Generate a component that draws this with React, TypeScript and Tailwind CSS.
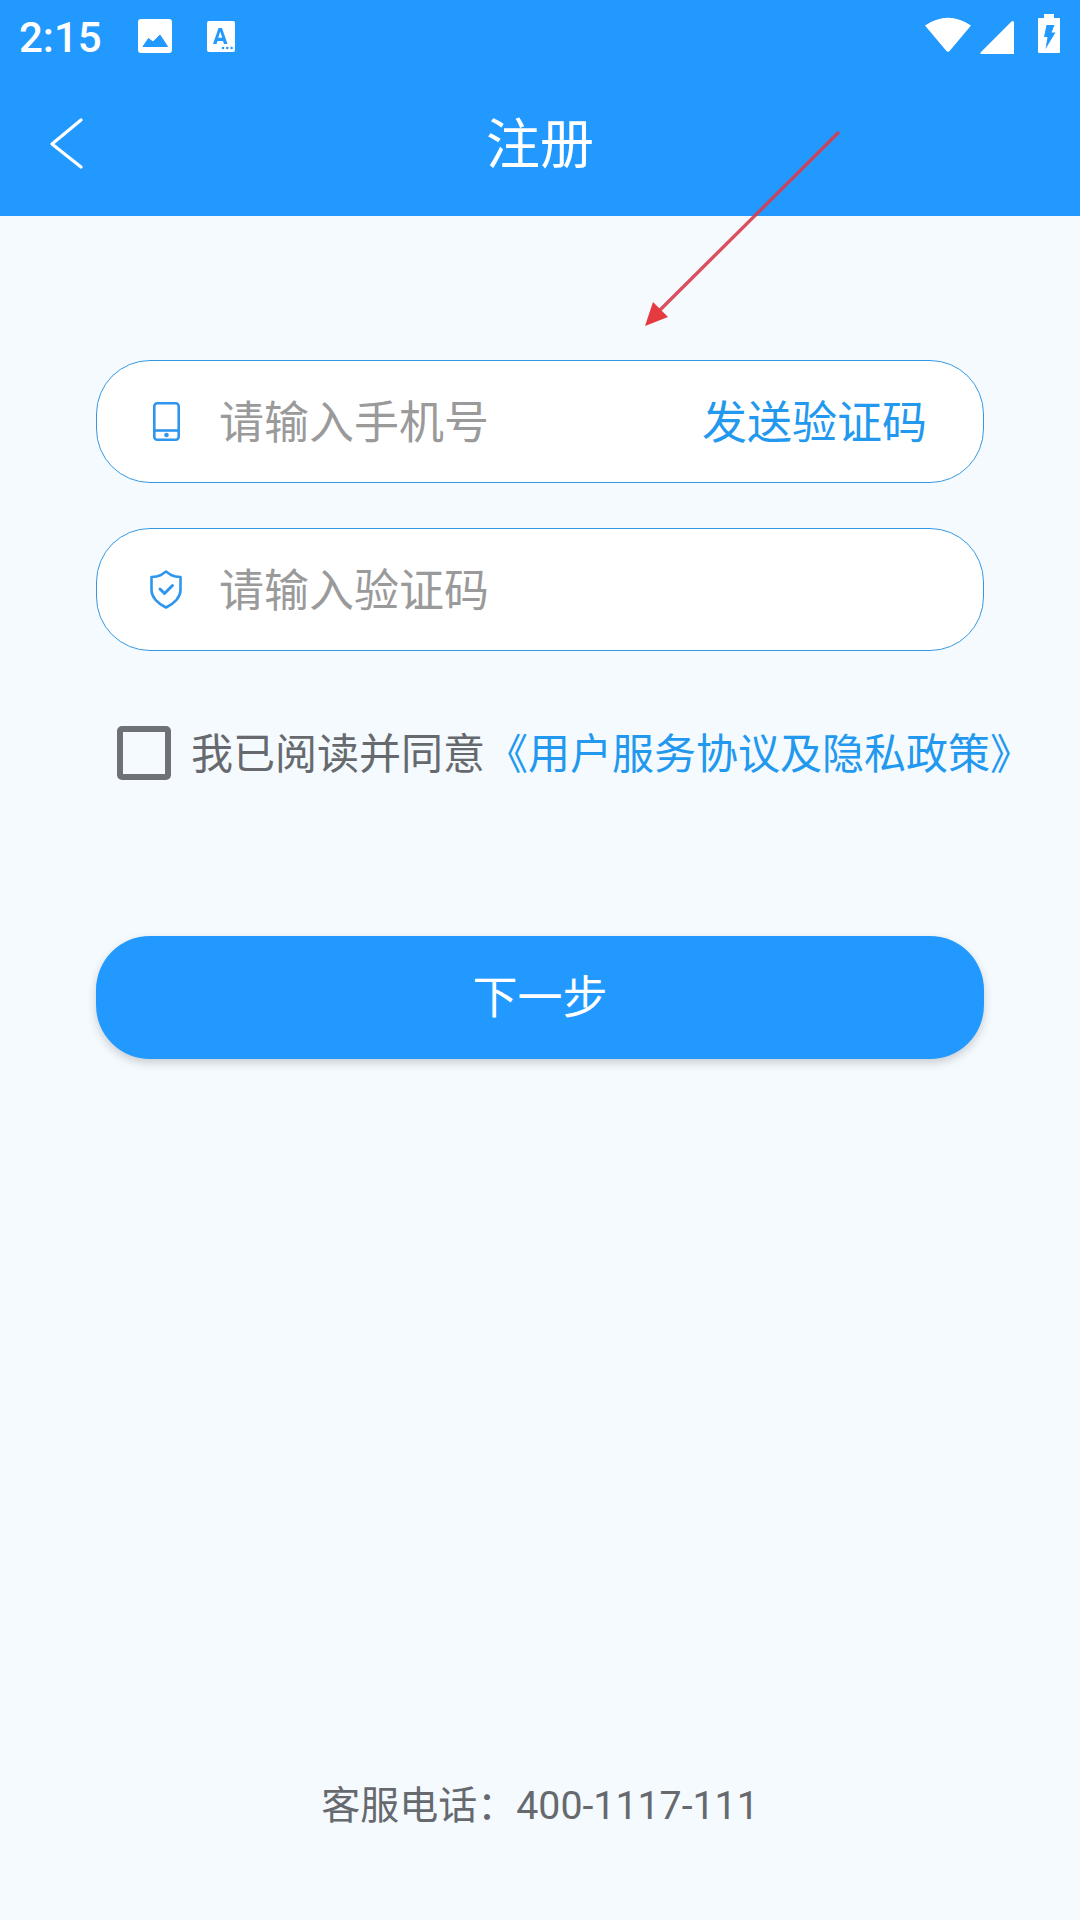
import React from "react";

const FONT = "font-['Roboto','Noto_Sans_CJK_SC',sans-serif]";

function StatusBar() {
  return (
    <div className="flex h-[72px] items-center justify-between pl-[19px] pr-[20px]">
      <div className="flex items-center">
        <span className="w-[81px] pt-[4px] text-[42px] font-medium leading-none text-white">2:15</span>
        <svg className="ml-[38px] shrink-0" width="34" height="34" viewBox="0 0 34 34">
          <rect width="34" height="34" rx="3" fill="#fff" />
          <path d="M5 27.5 L10.5 19.5 L15 23 L22 16 L29.5 27.5 Z" fill="#2299ff" stroke="#2299ff" strokeLinejoin="round" />
        </svg>
        <svg className="ml-[35px] shrink-0" width="28" height="31" viewBox="0 0 28 31">
          <rect width="28" height="31" rx="2" fill="#fff" />
          <path d="M6 23 L11.5 7 H15 L20.5 23 H17 L16 20 H10.5 L9.5 23 Z M11.3 16.8 H15.2 L13.2 10.5 Z" fill="#2299ff" fillRule="evenodd" />
          <circle cx="16" cy="27" r="1.3" fill="#2299ff" />
          <circle cx="20.3" cy="27" r="1.3" fill="#2299ff" />
          <circle cx="24.6" cy="27" r="1.3" fill="#2299ff" />
        </svg>
      </div>
      <div className="flex items-center">
        <svg className="mb-[2px] shrink-0" width="46" height="36" viewBox="0 0 46 36">
          <path d="M0 8.5 Q23 -7 46 8.5 L25 33.5 Q23 36 21 33.5 Z" fill="#fff" />
        </svg>
        <svg className="ml-[9px] mt-[1px] shrink-0" width="34" height="34" viewBox="0 0 34 34">
          <path d="M1 32 L31 2 Q34 -0.5 34 3 V34 H2 Q-1 34 1 32 Z" fill="#fff" />
        </svg>
        <svg className="mb-[5px] ml-[24px] shrink-0" width="22" height="39" viewBox="0 0 22 39">
          <path d="M6 0 H16 V4 H21 Q22 4 22 5 V38 Q22 39 21 39 H1 Q0 39 0 38 V5 Q0 4 1 4 H6 Z" fill="#fff" />
          <path d="M8.5 11 H16.5 L13.5 18.5 H17.5 L7.5 35 L9.5 23 H6 Z" fill="#2299ff" />
        </svg>
      </div>
    </div>
  );
}

function Field({ icon, placeholder, action }: { icon: React.ReactNode; placeholder: string; action?: string }) {
  return (
    <div className="flex h-[123px] items-center rounded-[54px] border border-[#3598e2] bg-white pl-[53px] pr-[56px]">
      <div className="flex w-[32px] shrink-0 justify-center">{icon}</div>
      <span className="ml-[37px] pt-[3px] text-[45px] leading-none text-[#9a9a9a]">{placeholder}</span>
      {action && <span className="ml-auto pt-[3px] text-[45px] leading-none text-[#2299ee]">{action}</span>}
    </div>
  );
}

export default function App() {
  return (
    <div className={`relative flex h-[1920px] w-[1080px] flex-col overflow-hidden bg-[#f5faff] ${FONT}`}>
      <header className="h-[216px] bg-[#2299ff]">
        <StatusBar />
        <div className="relative flex h-[144px] items-center justify-center">
          <svg className="absolute left-[48px] top-[46px]" width="38" height="52" viewBox="0 0 38 52" fill="none">
            <path d="M33 2 L4 26 L33 49" stroke="#fff" strokeWidth="3.2" strokeLinecap="round" strokeLinejoin="round" />
          </svg>
          <span className="pt-[3px] text-[54px] leading-none text-white">注册</span>
        </div>
      </header>

      <main className="flex flex-1 flex-col px-[96px] pt-[144px]">
        <div className="flex flex-col gap-[45px]">
          <Field
            placeholder="请输入手机号"
            action="发送验证码"
            icon={
              <svg width="27" height="39" viewBox="0 0 27 39" fill="none" stroke="#2f96ee" strokeWidth="2.6">
                <rect x="1.3" y="1.3" width="24.4" height="36.4" rx="3" />
                <path d="M1.3 28.5 H25.7" />
                <circle cx="13.5" cy="33" r="1" fill="#2f96ee" />
              </svg>
            }
          />
          <Field
            placeholder="请输入验证码"
            icon={
              <svg width="32" height="39" viewBox="0 0 32 39" fill="none" stroke="#2f96ee" strokeWidth="2.6" strokeLinejoin="round" strokeLinecap="round">
                <path d="M16 1.5 L21 5 Q25 7 30.5 7 V20 Q30.5 30 16 37.5 Q1.5 30 1.5 20 V7 Q7 7 11 5 Z" />
                <path d="M10 19 L14.5 23.5 L22.5 15.5" strokeWidth="3" />
              </svg>
            }
          />
        </div>

        <div className="ml-[21px] mt-[75px] flex h-[54px] items-center whitespace-nowrap">
          <div className="h-[54px] w-[54px] shrink-0 rounded-[5px] border-[6px] border-[#6e7276]" />
          <span className="ml-[20px] pt-[3px] text-[42px] leading-none text-[#666a6e]">我已阅读并同意</span>
          <span className="ml-[1px] pt-[3px] text-[42px] leading-none text-[#2299ee]">《用户服务协议及隐私政策》</span>
        </div>

        <button className="mt-[156px] flex h-[123px] items-center justify-center rounded-[54px] bg-[#2299ff] pt-[3px] text-[45px] text-white shadow-[0_4px_10px_rgba(0,0,0,0.18)]">
          下一步
        </button>

        <div className="mt-auto pb-[94px] text-center text-[39px] leading-none text-[#666a6e]">
          客服电话：<span className="text-[39.3px]">400-1117-111</span>
        </div>
      </main>

      <svg className="pointer-events-none absolute left-0 top-0" width="1080" height="400" viewBox="0 0 1080 400">
        <line x1="838" y1="133" x2="660" y2="310" stroke="#d83c4c" strokeOpacity="0.9" strokeWidth="3.4" strokeLinecap="round" />
        <path d="M645 326 L653 302 L668 317 Z" fill="#e53a3f" />
      </svg>
    </div>
  );
}
